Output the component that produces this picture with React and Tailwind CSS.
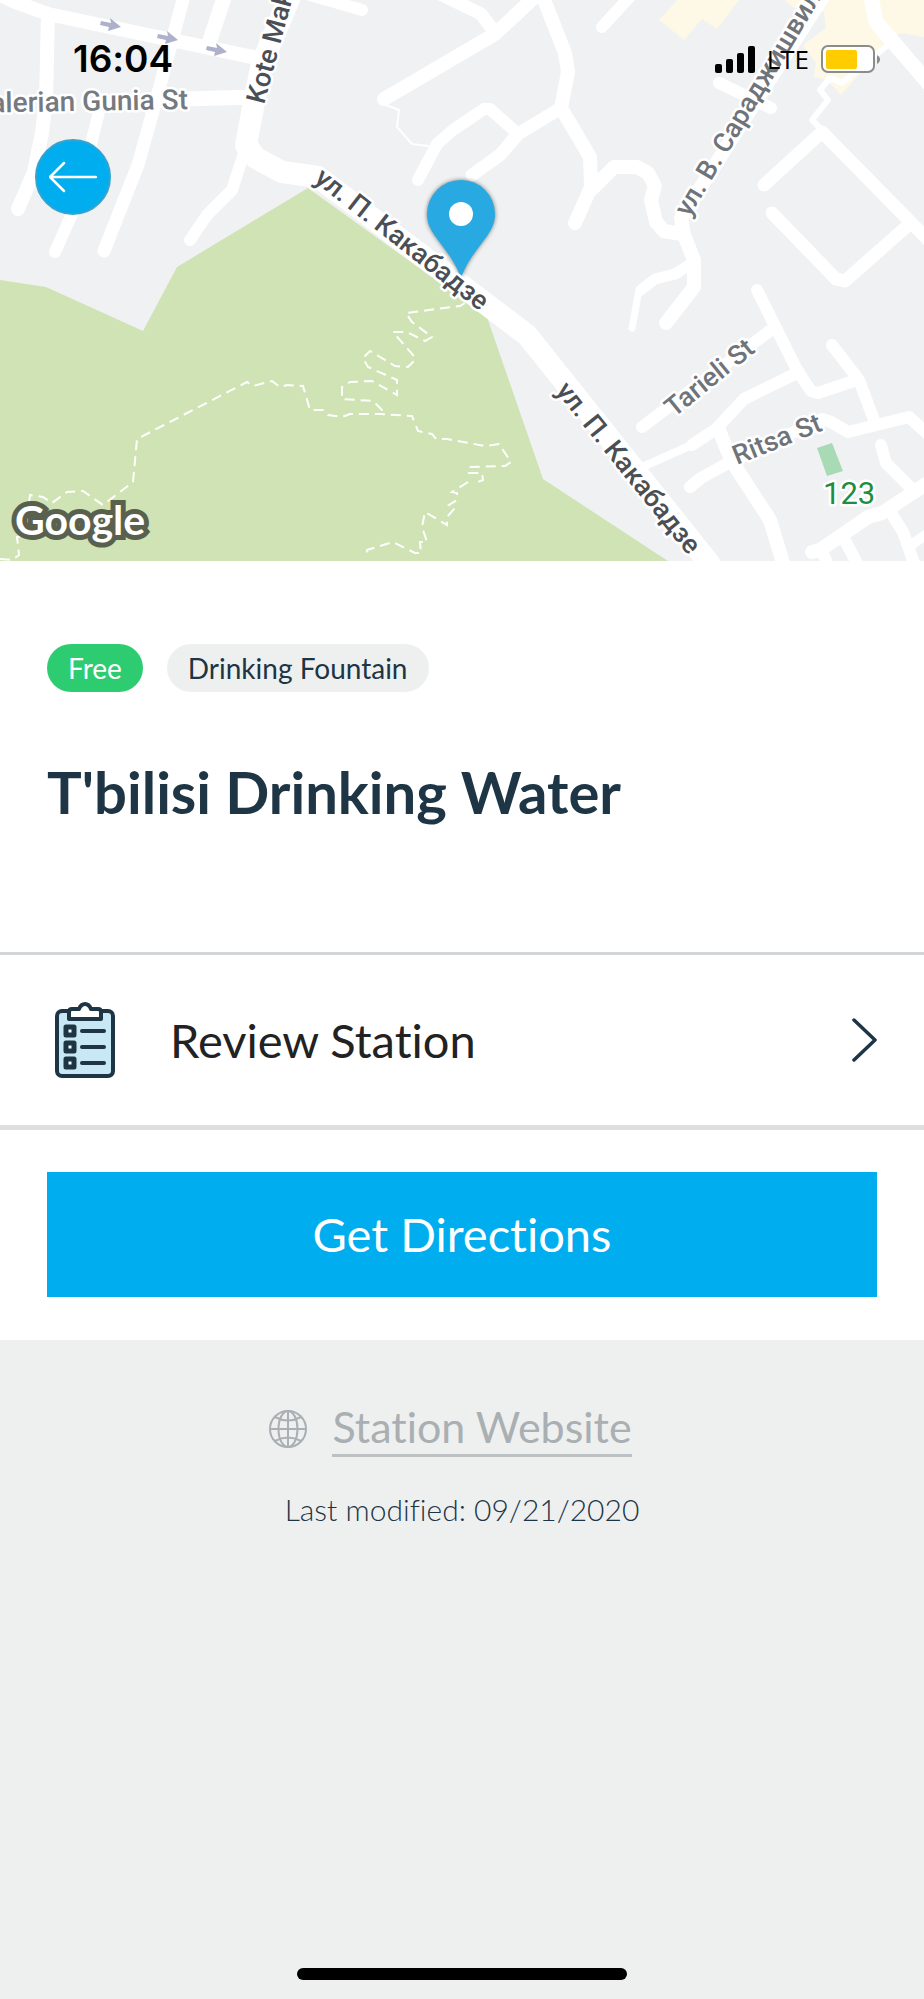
const roads = [
  { w: 14, p: "-5,-8 15,2 48,14 262,59" },
  { w: 14, p: "48,14 46,100 42,133 34,172 18,209" },
  { w: 12, p: "102,100 92,140 76,205 55,252" },
  { w: 13, p: "185,-8 157,97 138,165 130,185 104,251" },
  { w: 15, p: "226,-8 210,40" },
  { w: 22, p: "292,-8 262,63 255,97 246,145 256,158 282,172 318,177 527,335 709,563" },
  { w: 12, p: "245,150 232,190 207,215 190,240" },
  { w: 15, p: "185,99 255,97" },
  { w: 12, p: "300,-8 362,10" },
  { w: 13, p: "436,-8 481,14 493,30" },
  { w: 14, p: "540,-8 495,34 384,99" },
  { w: 2, p: "384,104 399,110 397,127 412,144 428,146" },
  { w: 14, p: "541,-8 565,53 568,72 561,108 590,157 591,187 575,223" },
  { w: 13, p: "561,108 518,134 500,155 472,175" },
  { w: 12, p: "517,133 490,109 484,109 453,130 437,144 418,180" },
  { w: 14, p: "591,190 614,167 637,167 648,173 655,186 651,200 656,222 664,231 682,234" },
  { w: 14, p: "826,-8 681,218 684,235 694,260 694,287 666,323" },
  { w: 11, p: "694,262 675,274 655,279 641,290" },
  { w: 7, p: "639,290 632,328" },
  { w: 12, p: "636,-10 602,27" },
  { w: 12, p: "719,83 771,108" },
  { w: 15, p: "870,-8 876,22 930,85" },
  { w: 6, p: "889,44 842,83 830,78 820,90 828,100 812,120 822,130" },
  { w: 13, p: "764,185 822,132 934,246" },
  { w: 13, p: "772,213 836,279 845,281 905,228" },
  { w: 12, p: "757,290 797,370 811,391 818,393 857,380" },
  { w: 12, p: "832,345 859,380 874,420" },
  { w: 12, p: "690,487 701,478 732,461 822,419 831,422 848,432 909,417 930,436" },
  { w: 12, p: "642,427 771,330" },
  { w: 12, p: "799,372 744,399 716,429 692,445" },
  { w: 8, p: "694,444 640,468" },
  { w: 14, p: "719,430 731,460 770,520 784,566" },
  { w: 12, p: "881,445 886,463 913,490" },
  { w: 14, p: "932,480 882,513 868,517 820,550 812,552" },
  { w: 12, p: "842,535 858,565" },
  { w: 12, p: "888,508 903,532 915,566" },
  { w: 12, p: "822,550 828,566" },
  { w: 10, p: "911,545 930,532" },
];

const trails = [
  "0,559 12,560 19,555 17,537 25,535 30,495 43,497 52,503 67,492 83,491 103,505 133,482 137,439 247,382 253,386 272,381 280,387 287,385 303,386 310,410 323,410 328,415 342,417 350,414 380,414 412,416 418,431 432,434 436,439 447,439 485,446 499,444 511,462 505,466 469,467 469,473 482,473 483,480 475,483",
  "468,482 452,492 457,493 457,500 449,505 455,508 447,517 447,525 425,512 422,527 427,542 420,542 421,553 415,553 393,542 367,550 368,558",
  "465,303 460,306 406,313 412,322 432,337 425,341 407,332 393,332 413,355 415,360 408,367 395,366 370,351 363,358 368,367 397,380 397,395 372,381 350,382 342,387 342,399 373,401 382,410 380,414",
];

const labels = [
  { t: "ул. П. Какабадзе", x: 313, y: 181, r: 38, s: 27, c: "#4a4f55" },
  { t: "ул. П. Какабадзе", x: 555, y: 391, r: 51, s: 27, c: "#4a4f55" },
  { t: "Kote Mak", x: 264, y: 105, r: -75, s: 27, c: "#4a4f55" },
  { t: "ул. В. Сараджишвил", x: 689, y: 218, r: -59, s: 27, c: "#6f747a" },
  { t: "Tarieli St", x: 674, y: 418, r: -39, s: 27, c: "#6f747a" },
  { t: "Ritsa St", x: 737, y: 465, r: -22, s: 27, c: "#6f747a" },
];

function Pin() {
  return (
    <g>
      <path
        d="M461 278C454 259 444 249 435 236C430 229 427 222 427 214A34 34 0 0 1 495 214C495 222 492 229 487 236C478 249 468 259 461 278Z"
        fill="#29a9e1"
        style={{ filter: "drop-shadow(0 0 2px rgba(0,0,0,.5))" }}
      />
      <circle cx="461" cy="214" r="12" fill="#fff" />
    </g>
  );
}

function Map() {
  return (
    <svg viewBox="0 0 924 561" className="block h-auto w-full" role="img" aria-label="Map">
      <rect width="924" height="561" fill="#f0f1f3" />
      <path d="M0 280L46 287L143 331L177 267L308 188L487 317L543 479L610 523L668 561H0Z" fill="#cfe3b4" />
      <g fill="#fef9e6">
        <path d="M677 0H739L717 29L702 19L684 40L659 20Z" />
        <path d="M784 0H924V37L901 33L889 42L841 95L827 80L814 77L816 63L803 45L826 28L824 12L794 8Z" />
      </g>
      <path d="M817 448L832 443L843 471L827 476Z" fill="#a8dab5" />
      <g fill="none" stroke="#fff" strokeLinecap="round" strokeLinejoin="round">
        {roads.map((r) => (
          <polyline key={r.p} points={r.p} strokeWidth={r.w} />
        ))}
      </g>
      <g fill="none" stroke="#fff" strokeWidth="2" strokeDasharray="10 6">
        {trails.map((p) => (
          <polyline key={p} points={p} />
        ))}
      </g>
      <g fill="#adb1cb">
        {["translate(100 22)", "translate(157 35)", "translate(206 47)"].map((t) => (
          <path key={t} transform={t} d="M1 -1L11 1L10 -4L21 5L8 9L9 5L0 3Z" />
        ))}
      </g>
      <Pin />
      <g
        fontFamily="Roboto, sans-serif"
        fontWeight="500"
        stroke="#fff"
        strokeWidth="5"
        strokeLinejoin="round"
        style={{ paintOrder: "stroke" }}
      >
        <text x="188" y="109" fontSize="28" textAnchor="end" fill="#757a80" transform="rotate(-1 188 109)">
          alerian Gunia St
        </text>
        {labels.map((l) => (
          <text key={l.t + l.x} x={l.x} y={l.y} fontSize={l.s} fill={l.c} transform={`rotate(${l.r} ${l.x} ${l.y})`}>
            {l.t}
          </text>
        ))}
        <text x="823" y="504" fontSize="31" fontWeight="400" fill="#1e8e3e">
          123
        </text>
      </g>
      <text
        x="15"
        y="535"
        fontFamily="Lato, sans-serif"
        fontWeight="700"
        fontSize="41"
        fill="#fff"
        stroke="#59614e"
        strokeWidth="10"
        style={{ paintOrder: "stroke" }}
      >
        Google
      </text>
    </svg>
  );
}

function StatusBar() {
  return (
    <div className="absolute inset-x-0 top-0 flex items-center justify-between pt-9 pr-[43px] pl-[73px] text-black">
      <time className="font-[Inter] text-[37px] leading-[46px] font-semibold">16:04</time>
      <div className="flex items-center gap-3">
        <svg className="h-[27px] w-10" viewBox="0 0 40 27" aria-hidden="true">
          <rect x="0" y="18" width="7" height="9" rx="2" />
          <rect x="11" y="13" width="7" height="14" rx="2" />
          <rect x="22" y="7" width="7" height="20" rx="2" />
          <rect x="33" y="0" width="7" height="27" rx="2" />
        </svg>
        <span className="font-['Open_Sans'] text-[26px] leading-[46px] font-medium">LTE</span>
        <svg className="h-7 w-[60px]" viewBox="0 0 60 28" aria-hidden="true">
          <rect x="1" y="1" width="52" height="26" rx="6" fill="#fff" stroke="#8c8c8c" strokeWidth="2" />
          <rect x="5" y="5" width="31" height="19" rx="2" fill="#ffcc00" />
          <path d="M56 10C60 12 60 17 56 19Z" fill="#8c8c8c" />
        </svg>
      </div>
    </div>
  );
}

function ClipboardIcon() {
  return (
    <svg className="h-[78px] w-[62px] shrink-0" viewBox="0 0 62 78" fill="none" stroke="#1d3545" strokeWidth="4" strokeLinejoin="round" strokeLinecap="round" aria-hidden="true">
      <rect x="3" y="10" width="56" height="65" rx="5" fill="#c9e8f6" />
      <path d="M15 18V11Q15 8 18 8H25Q27 3 31 3T37 8H44Q47 8 47 11V18Z" fill="#fff" />
      {[26, 42, 58].map((y) => (
        <g key={y}>
          <rect x="12" y={y} width="8" height="8" fill="#fff" strokeWidth="5" />
          <path d="M28 0H50" transform={`translate(0 ${y + 4})`} />
        </g>
      ))}
    </svg>
  );
}

function GlobeIcon() {
  return (
    <svg className="size-10 shrink-0" viewBox="0 0 40 40" fill="none" stroke="#a9afb2" strokeWidth="2" aria-hidden="true">
      <circle cx="20" cy="20" r="18" />
      <ellipse cx="20" cy="20" rx="9.5" ry="18" />
      <path d="M20 2V38M2 20H38M7 8Q20 15 33 8M7 32Q20 25 33 32" />
    </svg>
  );
}

export default function App() {
  return (
    <div className="flex min-h-screen flex-col bg-[#eef0f0] font-[Lato,sans-serif] text-[#1d3545] [font-variant-ligatures:none]">
      <header className="relative">
        <Map />
        <StatusBar />
        <button
          type="button"
          aria-label="Back"
          className="absolute top-[139px] left-[35px] flex size-[76px] items-center justify-center rounded-full border-2 border-[#35a3cf] bg-[#00aeef]"
        >
          <svg className="h-8 w-12" viewBox="0 0 48 32" fill="none" stroke="#fff" strokeWidth="2.5" strokeLinecap="round" strokeLinejoin="round" aria-hidden="true">
            <path d="M47 16H1M15 2L1 16L15 30" />
          </svg>
        </button>
      </header>

      <main className="bg-white">
        <section className="px-[47px] pt-[83px] pb-[124px]">
          <div className="flex gap-6">
            <span className="rounded-full bg-[#2ecc71] px-[21px] text-[28px] leading-[48px] text-white">Free</span>
            <span className="rounded-full bg-[#eef0f0] px-[21px] text-[28px] leading-[48px]">Drinking Fountain</span>
          </div>
          <h1 className="mt-16 text-[58px] leading-[72px] font-bold">T'bilisi Drinking Water</h1>
        </section>

        <button
          type="button"
          className="flex w-full items-center border-t-[3px] border-b-[5px] border-t-[#d3d6d8] border-b-[#dddfe0] px-[54px] py-[46px] pr-[46px] text-left"
        >
          <ClipboardIcon />
          <span className="ml-[54px] flex-1 text-[47px] leading-[78px] text-[#222]">Review Station</span>
          <svg className="h-11 w-7" viewBox="0 0 28 44" fill="none" stroke="#1d3545" strokeWidth="3.5" strokeLinecap="round" strokeLinejoin="round" aria-hidden="true">
            <path d="M4 2L25 22L4 42" />
          </svg>
        </button>

        <div className="px-[47px] pt-[42px] pb-[43px]">
          <button type="button" className="w-full bg-[#00aeef] text-[47px] leading-[125px] text-white">
            Get Directions
          </button>
        </div>
      </main>

      <footer className="flex flex-1 flex-col items-center pt-[60px]">
        <a href="#website" className="mr-6 flex items-center gap-6 text-[43px] leading-[54px] text-[#a9afb2]">
          <GlobeIcon />
          <span className="border-b-3 border-[#bcc1c3]">Station Website</span>
        </a>
        <p className="mt-8 text-[30px] leading-[40px] font-light">Last modified: 09/21/2020</p>
        <div className="mt-auto mb-[19px] h-3 w-[330px] rounded-full bg-black" />
      </footer>
    </div>
  );
}
